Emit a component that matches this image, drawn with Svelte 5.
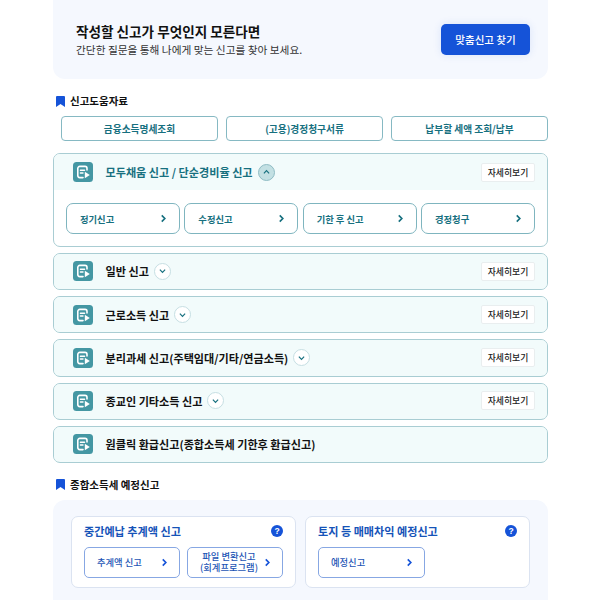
<script>
  const docs = ['금융소득명세조회', '(고용)경정청구서류', '납부할 세액 조회/납부'];
  const subs = ['정기신고', '수정신고', '기한 후 신고', '경정청구'];
  const rows = [
    { label: '일반 신고', more: true },
    { label: '근로소득 신고', more: true },
    { label: '분리과세 신고(주택임대/기타/연금소득)', more: true },
    { label: '종교인 기타소득 신고', more: true },
    { label: '원클릭 환급신고(종합소득세 기한후 환급신고)', more: false }
  ];
</script>

{#snippet rowIcon()}
  <svg class="ricon" viewBox="0 0 20 20" aria-hidden="true">
    <rect width="20" height="20" rx="3.5" fill="#4497a3" />
    <path d="M14 8V6.400a2 2 0 0 0-2-2H6.800a2 2 0 0 0-2 2v7.200a2 2 0 0 0 2 2h3.200" fill="none" stroke="#fff" stroke-width="1.600" stroke-linecap="round" />
    <path d="M7.400 8.200h4.200M7.400 11h2.600" fill="none" stroke="#fff" stroke-width="1.400" stroke-linecap="round" />
    <path d="M11.800 9.700l5 3.300-5 3.300z" fill="#fff" />
  </svg>
{/snippet}

{#snippet chev(color)}
  <svg class="chev" viewBox="0 0 8 10" aria-hidden="true">
    <path d="M2 1.500 5.500 5 2 8.500" fill="none" stroke={color} stroke-width="1.900" />
  </svg>
{/snippet}

{#snippet mark()}
  <svg class="mark" viewBox="0 0 9 11" aria-hidden="true"><path d="M0 1a1 1 0 0 1 1-1h7a1 1 0 0 1 1 1v10L4.500 8 0 11z" fill="#1553d8" /></svg>
{/snippet}

{#snippet toggle(open)}
  <span class="toggle" class:open>
    <svg viewBox="0 0 8 6" aria-hidden="true"><path d={open ? 'M1 4.500 4 1.500l3 3' : 'M1 1.500l3 3 3-3'} fill="none" stroke="#17707f" stroke-width="1.400" /></svg>
  </span>
{/snippet}

{#snippet help()}
  <span class="help">?</span>
{/snippet}

<div class="page">
  <section class="banner">
    <div>
      <h1>작성할 신고가 무엇인지 모른다면</h1>
      <p>간단한 질문을 통해 나에게 맞는 신고를 찾아 보세요.</p>
    </div>
    <button class="cta">맞춤신고 찾기</button>
  </section>

  <h2 class="heading first">{@render mark()}신고도움자료</h2>
  <div class="docs">
    {#each docs as d}<button class="doc">{d}</button>{/each}
  </div>

  <div class="accordion open">
    <div class="head">
      {@render rowIcon()}
      <span class="title teal">모두채움 신고 / 단순경비율 신고</span>
      {@render toggle(true)}
      <button class="more">자세히보기</button>
    </div>
    <div class="subs">
      {#each subs as s}
        <button class="sub"><span>{s}</span>{@render chev('#17707f')}</button>
      {/each}
    </div>
  </div>

  {#each rows as r}
    <div class="accordion">
      <div class="head">
        {@render rowIcon()}
        <span class="title">{r.label}</span>
        {#if r.more}
          {@render toggle(false)}
          <button class="more">자세히보기</button>
        {/if}
      </div>
    </div>
  {/each}

  <h2 class="heading second">{@render mark()}종합소득세 예정신고</h2>
  <section class="panel">
    <div class="card">
      <div class="card-head"><h3>중간예납 추계액 신고</h3>{@render help()}</div>
      <div class="actions">
        <button class="act"><span>추계액 신고</span>{@render chev('#1553d8')}</button>
        <button class="act two"><span>파일 변환신고<br />(회계프로그램)</span>{@render chev('#1553d8')}</button>
      </div>
    </div>
    <div class="card">
      <div class="card-head"><h3>토지 등 매매차익 예정신고</h3>{@render help()}</div>
      <div class="actions">
        <button class="act wide"><span>예정신고</span>{@render chev('#1553d8')}</button>
      </div>
    </div>
  </section>
</div>

<style>
  :global(body) { margin: 0; background: #fff; }
  .page {
    box-sizing: border-box;
    width: 600px;
    height: 600px;
    overflow: hidden;
    padding: 0 52px 0 53px;
    font-family: "Noto Sans CJK KR", "Noto Sans", sans-serif;
    color: #111;
  }
  button { font-family: inherit; cursor: pointer; margin: 0; }

  .banner {
    height: 79px;
    box-sizing: border-box;
    background: #f5f8fe;
    border-radius: 0 0 12px 12px;
    padding: 0 18px 0 23px;
    display: flex;
    align-items: center;
    justify-content: space-between;
  }
  h1 { margin: 0; font-size: 13.6px; line-height: 20px; font-weight: 700; color: #111; }
  .banner p { margin: 0; font-size: 10.7px; line-height: 18px; color: #333; }
  .cta {
    width: 89px; height: 31px; padding: 0;
    background: #1553d8; color: #fff;
    border: 0; border-radius: 5px;
    font-size: 10.5px; font-weight: 500;
    box-shadow: 0 0 8px rgba(21, 83, 216, .12);
  }

  .heading {
    margin: 0;
    display: flex; align-items: center; gap: 5px;
    font-size: 10.5px; line-height: 16px; font-weight: 700; color: #111;
    padding-left: 3px;
  }
  .first { margin-top: 14px; }
  .second { margin-top: 14px; }
  .mark { width: 9px; height: 11px; flex: none; }

  .docs { display: flex; gap: 8px; margin: 7px 0 12px 8px; }
  .doc {
    flex: 1 1 0; height: 25px; padding: 0;
    background: #fff;
    border: 1.5px solid #86b9c3; border-radius: 4px;
    color: #17707f; font-size: 9.7px; font-weight: 700;
  }

  .accordion {
    box-sizing: border-box;
    height: 37.2px;
    border: 1px solid #a9cdd3;
    border-bottom-width: 1.5px;
    border-radius: 7px;
    background: #f2fbfb;
    margin-bottom: 6px;
    overflow: hidden;
  }
  .accordion.open { background: #fff; height: 94px; }
  .head {
    height: 34.7px;
    display: flex; align-items: center;
    padding: 0 12px 0 18.500px;
    background: #f2fbfb;
  }
  .accordion.open .head { height: 36px; }
  .ricon { width: 20px; height: 20px; flex: none; }
  .title { margin-left: 13px; font-size: 11.1px; font-weight: 700; color: #111; white-space: nowrap; }
  .title.teal { color: #17707f; }
  .toggle {
    width: 17px; height: 17px; margin-left: 5px;
    box-sizing: border-box;
    border: 1px solid #c6dfe3; border-radius: 50%;
    background: #fff;
    display: flex; align-items: center; justify-content: center;
  }
  .toggle.open { background: #c3e0e3; border-color: #8fbcc4; }
  .toggle svg { width: 7px; height: 6px; }
  .more {
    margin-left: auto;
    width: 54px; height: 19px; padding: 0;
    background: #fff;
    border: 1px solid #e9eeef; border-radius: 2px;
    font-size: 8.8px; font-weight: 500; color: #222;
  }

  .subs { display: flex; justify-content: space-between; padding: 13px 12px 0; }
  .sub {
    box-sizing: border-box;
    width: 114px; height: 31px;
    display: flex; align-items: center; justify-content: space-between;
    padding: 0 12px 0 13px;
    background: #fff;
    border: 1.5px solid #7fb5bf; border-radius: 7px;
    color: #17707f; font-size: 9.3px; font-weight: 700;
  }
  .chev { width: 7px; height: 9px; flex: none; }

  .panel {
    margin-top: 7px;
    height: 120px;
    box-sizing: border-box;
    background: #f5f8fe;
    border-radius: 12px;
    padding: 16px 18px;
    display: flex; gap: 9px;
  }
  .card {
    flex: 1 1 0; height: 72px;
    box-sizing: border-box;
    background: #fff;
    border: 1px solid #dbe3f1; border-radius: 7px;
    padding: 6px 12px;
  }
  .card-head { display: flex; align-items: center; justify-content: space-between; height: 17px; margin-bottom: 7px; }
  h3 { margin: 0; font-size: 11.1px; font-weight: 700; color: #1553b8; white-space: nowrap; }
  .help {
    width: 12px; height: 12px; border-radius: 50%;
    background: #1553d8; color: #fff;
    font-size: 8.5px; font-weight: 700; line-height: 12px; text-align: center;
    font-family: "Liberation Sans", sans-serif;
  }
  .actions { display: flex; gap: 7px; }
  .act {
    box-sizing: border-box;
    width: 96px; height: 31px;
    display: flex; align-items: center; justify-content: space-between;
    padding: 0 11px 0 12px;
    background: #fff;
    border: 1.5px solid #87a7e3; border-radius: 5px;
    color: #1d55b5; font-size: 9.3px; font-weight: 500; line-height: 11.500px; text-align: center;
  }
  .act.wide { width: 107px; }
</style>
